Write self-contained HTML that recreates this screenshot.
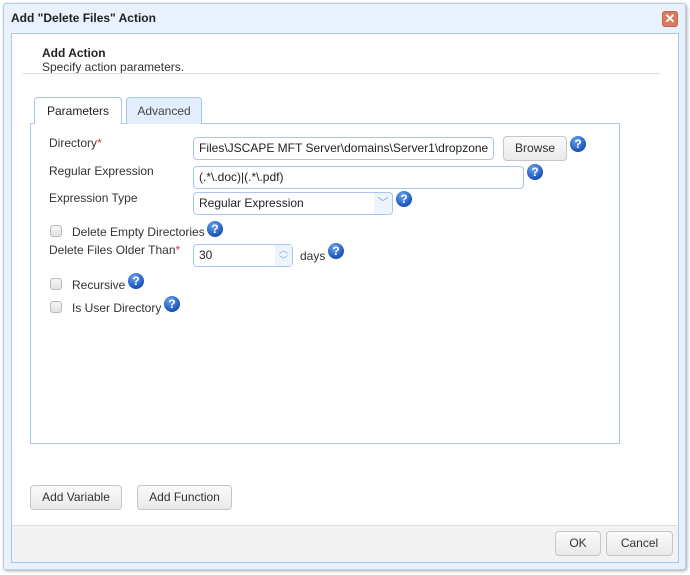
<!DOCTYPE html>
<html><head><style>
*{box-sizing:border-box}
body{margin:0;width:690px;height:575px;background:#fff;font-family:"Liberation Sans",Arial,sans-serif;font-size:12px;color:#333;position:relative;overflow:hidden}
.abs{position:absolute}
.frame{left:3px;top:3px;width:683px;height:567px;background:#e9f1fc;border:1px solid #b8cce6;border-radius:3px;box-shadow:1px 1px 3px rgba(0,0,0,.35)}
.inner{left:11px;top:33px;width:668px;height:530px;background:#fff;border:1px solid #a9c6ee}
.title{left:11px;top:11px;font-size:12px;font-weight:bold;color:#222}
.close{left:662px;top:11px;width:16px;height:16px;background:#d77c5e;border:1px solid #c0664a;border-radius:3px;color:#fff;font-size:13px;line-height:14px;text-align:center;font-weight:bold}
.lbl{font-size:12px;color:#333}
.box{position:absolute;height:23px;border:1px solid #a9c6ee;border-radius:4px;background:#fff;font-family:"Liberation Sans",Arial,sans-serif;font-size:12px;color:#222;padding:0 5px;line-height:21px;white-space:nowrap;overflow:hidden}
.btn{position:absolute;height:25px;border:1px solid #c6c6c6;border-radius:4px;background:linear-gradient(#fafafa,#e9e9e9);font-size:12px;color:#333;text-align:center;line-height:23px}
.q{position:absolute;width:16px;height:16px;border-radius:50%;background:radial-gradient(circle at 40% 30%,#6aa6f0,#1a52b8 70%);color:#fff;font-weight:bold;font-size:12px;line-height:16px;text-align:center;box-shadow:0 0 0 1px #fff}
.cb{position:absolute;width:12px;height:12px;border:1px solid #bbb;border-radius:3px;background:linear-gradient(#f4f4f4,#e2e2e2)}
.req{color:#d33}
</style></head><body>
<div class="abs frame"></div>
<div class="abs title">Add "Delete Files" Action</div>
<div class="abs close">✕</div>
<div class="abs inner"></div>
<div class="abs" style="left:12px;top:525px;width:666px;height:37px;background:#f2f2f2;border-top:1px solid #dedede"></div>
<div class="abs" style="left:42px;top:46px;font-weight:bold;font-size:12px;color:#222">Add Action</div>
<div class="abs" style="left:42px;top:60px;color:#333">Specify action parameters.</div>
<div class="abs" style="left:23px;top:73px;width:637px;height:1px;background:#ddd"></div>
<div class="abs" style="left:30px;top:123px;width:590px;height:321px;border:1px solid #a9c6ee"></div>
<div class="abs" style="left:34px;top:97px;width:88px;height:27px;border:1px solid #a9c6ee;border-bottom:none;border-radius:4px 4px 0 0;background:#fff;text-align:center;line-height:26px;color:#222">Parameters</div>
<div class="abs" style="left:126px;top:97px;width:76px;height:27px;border:1px solid #a9c6ee;border-bottom:none;border-radius:4px 4px 0 0;background:#e3eefc;text-align:center;line-height:26px;color:#444">Advanced</div>
<div class="abs lbl" style="left:49px;top:136px">Directory<span class="req">*</span></div>
<div class="box" style="left:193px;top:137px;width:301px">Files\JSCAPE MFT Server\domains\Server1\dropzone</div>
<div class="btn" style="left:503px;top:136px;width:64px">Browse</div>
<div class="q" style="left:570px;top:136px">?</div>
<div class="abs lbl" style="left:49px;top:164px">Regular Expression</div>
<div class="box" style="left:193px;top:166px;width:331px">(.*\.doc)|(.*\.pdf)</div>
<div class="q" style="left:527px;top:164px">?</div>
<div class="abs lbl" style="left:49px;top:191px">Expression Type</div>
<div class="box" style="left:193px;top:192px;width:200px">Regular Expression</div>
<div class="abs" style="left:374px;top:193px;width:18px;height:21px;background:#eef4fc;color:#7aa6d8;font-size:11px;text-align:center;line-height:21px;border-radius:0 4px 4px 0">﹀</div>
<div class="q" style="left:396px;top:191px">?</div>
<div class="cb" style="left:50px;top:225px"></div>
<div class="abs lbl" style="left:72px;top:225px">Delete Empty Directories</div>
<div class="q" style="left:207px;top:221px">?</div>
<div class="abs lbl" style="left:49px;top:243px">Delete Files Older Than<span class="req">*</span></div>
<div class="box" style="left:193px;top:244px;width:100px">30</div>
<div class="abs" style="left:275px;top:245px;width:17px;height:21px;background:#eef4fc;color:#7aa6d8;font-size:9px;text-align:center;line-height:10px">︿<br>﹀</div>
<div class="abs lbl" style="left:300px;top:249px">days</div>
<div class="q" style="left:328px;top:243px">?</div>
<div class="cb" style="left:50px;top:278px"></div>
<div class="abs lbl" style="left:72px;top:278px">Recursive</div>
<div class="q" style="left:128px;top:273px">?</div>
<div class="cb" style="left:50px;top:301px"></div>
<div class="abs lbl" style="left:72px;top:301px">Is User Directory</div>
<div class="q" style="left:164px;top:296px">?</div>
<div class="btn" style="left:30px;top:485px;width:92px">Add Variable</div>
<div class="btn" style="left:137px;top:485px;width:95px">Add Function</div>
<div class="btn" style="left:555px;top:531px;width:46px">OK</div>
<div class="btn" style="left:606px;top:531px;width:67px">Cancel</div>
</body></html>
